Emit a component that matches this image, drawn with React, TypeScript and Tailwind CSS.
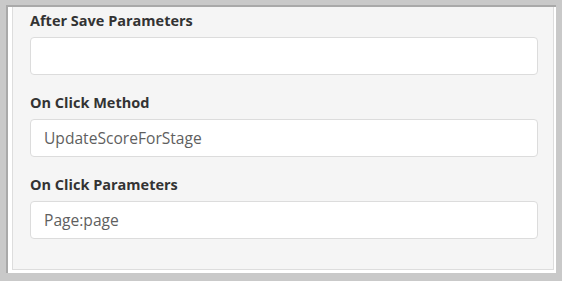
import React from 'react';

type Field = { label: string; value: string };

const FIELDS: Field[] = [
  { label: 'After Save Parameters', value: '' },
  { label: 'On Click Method', value: 'UpdateScoreForStage' },
  { label: 'On Click Parameters', value: 'Page:page' },
];

const FormField: React.FC<{ field: Field }> = ({ field }) => (
  <div className="mb-[19px]">
    <label className="block h-[18px] mb-[7px] text-[14.5px] leading-[18px] font-bold text-[#333333]">
      {field.label}
    </label>
    <input
      readOnly
      value={field.value}
      className="block w-full h-[38px] px-[13px] rounded-[4px] border border-[#dcdcdc] bg-white text-[15.6px] text-[#5f5f5f] outline-none"
      style={{ fontFamily: '"Open Sans", sans-serif' }}
    />
  </div>
);

const App: React.FC = () => {
  return (
    <div
      className="w-[562px] h-[281px] bg-[#c9c9c9] pt-[5px] pl-[6px] pr-[6px] pb-[8px] overflow-hidden"
      style={{ fontFamily: '"Open Sans", sans-serif' }}
    >
      <div className="h-full border-t-2 border-l-2 border-[#a9a9a9] bg-white pl-[4px] pr-[2px] pb-[3px]">
        <div className="h-full bg-[#f5f5f5] border border-t-0 border-[#dddddd] pl-[17px] pr-[15px] pt-[5px]">
          {FIELDS.map(f => (
            <FormField key={f.label} field={f} />
          ))}
        </div>
      </div>
    </div>
  );
};

export default App;
